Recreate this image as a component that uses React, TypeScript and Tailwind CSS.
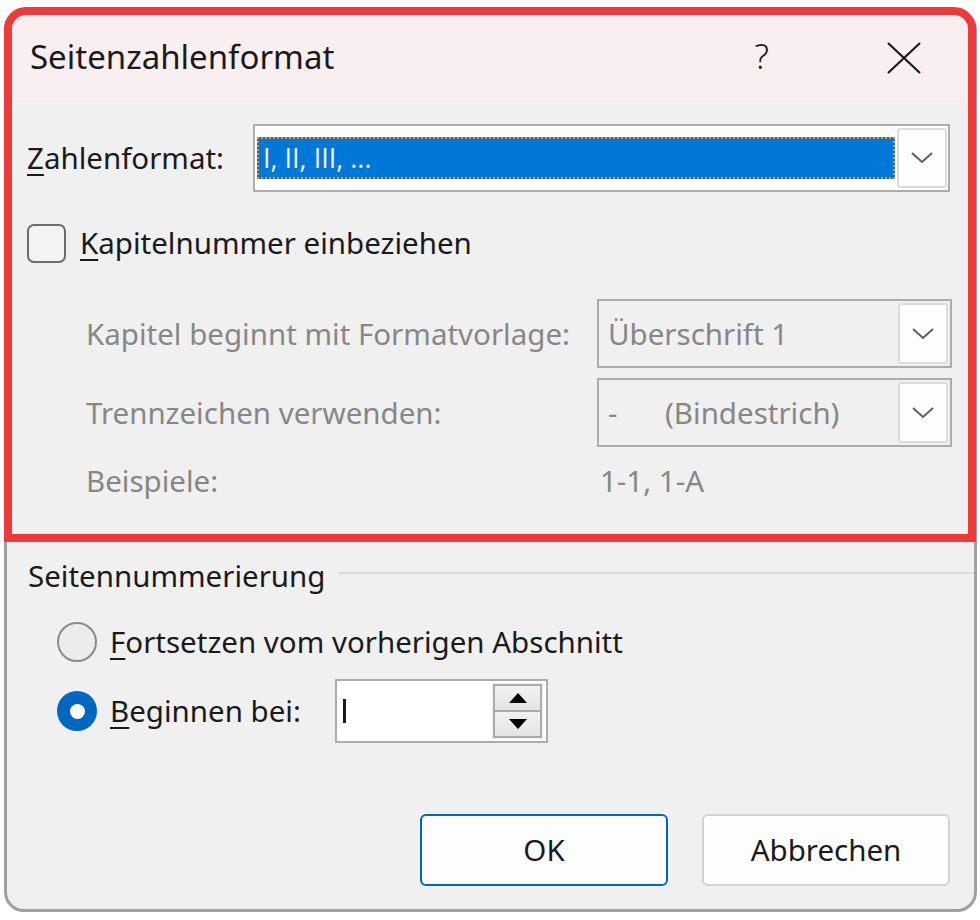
import React from 'react';

const font = {fontFamily: '"Noto Sans", "Open Sans", sans-serif'};

function Chevron() {
  return (
    <svg width="22" height="12" viewBox="0 0 22 12" className="block">
      <polyline points="1,1 11,10 21,1" fill="none" stroke="#5f5f5f" strokeWidth="2" />
    </svg>
  );
}

function DropButton() {
  return (
    <div className="flex h-full w-[50px] items-center justify-center rounded-[3px] border-2 border-[#dcdcdc] bg-[#fdfdfd]">
      <Chevron />
    </div>
  );
}

function Underlined({first, rest}: {first: string; rest: string}) {
  return (
    <span>
      <span className="underline decoration-2 underline-offset-[5px]">{first}</span>
      {rest}
    </span>
  );
}

function Radio({checked}: {checked?: boolean}) {
  if (checked) {
    return (
      <div className="flex h-[40px] w-[40px] items-center justify-center rounded-full bg-[#0067c0]">
        <div className="h-[15px] w-[15px] rounded-full bg-white" />
      </div>
    );
  }
  return <div className="h-[40px] w-[40px] rounded-full border-2 border-[#8a8a8a] bg-[#ececec]" />;
}

function Triangle({down}: {down?: boolean}) {
  return (
    <svg width="18" height="10" viewBox="0 0 18 10" className="block">
      <polygon points={down ? '0,0 18,0 9,10' : '9,0 18,10 0,10'} fill="#000" />
    </svg>
  );
}

export default function App() {
  return (
    <div className="relative h-[920px] w-[980px] bg-white text-[29.5px] text-[#1a1a1a]" style={font}>
      <div className="px-[4px] pt-[10px]">
        <div className="flex h-[902px] w-[973px] flex-col overflow-hidden rounded-[20px] border-[3px] border-[#a0a0a0] bg-[#f0f0f0]">
          {/* title bar */}
          <div className="flex h-[87px] shrink-0 items-center bg-[#f9eff1] pl-[23px] text-[33px]">
            <span>Seitenzahlenformat</span>
            <span className="ml-auto mr-[117px] text-[34px] font-light">?</span>
            <svg width="36" height="32" viewBox="0 0 36 32" className="mr-[52px] mt-[2px]">
              <path d="M2 1 L34 31 M34 1 L2 31" stroke="#1a1a1a" strokeWidth="2.2" />
            </svg>
          </div>

          {/* body */}
          <div className="flex flex-1 flex-col pl-[20px]">
            <div className="mt-[24px] flex h-[68px] items-center">
              <div className="w-[226px]">
                <Underlined first="Z" rest="ahlenformat:" />
              </div>
              <div className="flex h-full w-[697px] items-center border-2 border-[#acacb0] bg-white py-[2px] pl-[2px] pr-[1px]">
                <div
                  className="flex h-[42px] flex-1 items-center border-2 border-dotted border-[#f08a24] bg-[#0078d7] pl-[4px] text-[27px] text-[#f3f0ff]"
                  style={{fontFamily: '"Open Sans", "Noto Sans", sans-serif'}}
                >
                  I, II, III, ...
                </div>
                <div className="ml-[2px] h-full">
                  <DropButton />
                </div>
              </div>
            </div>

            <div className="mt-[29px] flex items-center">
              <div className="h-[39px] w-[39px] rounded-[7px] border-2 border-[#6c6c6c] bg-[#f3f3f3]" />
              <div className="ml-[14px]">
                <Underlined first="K" rest="apitelnummer einbeziehen" />
              </div>
            </div>

            <div className="mt-[34px] flex flex-col gap-[10px] pl-[59px] text-[#878787]">
              <div className="flex h-[69px] items-center">
                <div className="w-[511px]">Kapitel beginnt mit Formatvorlage:</div>
                <div className="flex h-full w-[355px] items-center border-2 border-[#acacb0] pl-[9px]">
                  <span className="flex-1">Überschrift 1</span>
                  <div className="h-full py-[2px] pr-[2px]">
                    <DropButton />
                  </div>
                </div>
              </div>
              <div className="flex h-[69px] items-center">
                <div className="w-[511px]">Trennzeichen verwenden:</div>
                <div className="flex h-full w-[355px] items-center border-2 border-[#acacb0] pl-[9px]">
                  <span className="w-[57px]">-</span>
                  <span className="flex-1">(Bindestrich)</span>
                  <div className="h-full py-[2px] pr-[2px]">
                    <DropButton />
                  </div>
                </div>
              </div>
              <div className="mt-[2px] flex items-center">
                <div className="w-[514px]">Beispiele:</div>
                <div>1-1, 1-A</div>
              </div>
            </div>

            <div className="mt-[50px] flex items-center">
              <span className="ml-[1px]">Seitennummerierung</span>
              <div className="ml-[14px] mt-[-6px] h-[2px] flex-1 bg-[#dcdcdc]" />
            </div>

            <div className="mt-[22px] flex items-center pl-[30px]">
              <Radio />
              <div className="ml-[13px]">
                <Underlined first="F" rest="ortsetzen vom vorherigen Abschnitt" />
              </div>
            </div>

            <div className="mt-[15px] flex items-center pl-[30px]">
              <Radio checked />
              <div className="ml-[13px] w-[225px]">
                <Underlined first="B" rest="eginnen bei:" />
              </div>
              <div className="flex h-[64px] w-[213px] items-center border-2 border-[#acacac] bg-white pl-[6px]">
                <div className="h-[24px] w-[3px] bg-[#1a1a1a]" />
                <div className="ml-auto mr-[3px] flex h-[56px] w-[51px] flex-col bg-[#f0f0f0] p-[1px]">
                  <div className="flex flex-1 items-center justify-center border-2 border-[#acacac] bg-gradient-to-b from-[#f2f2f2] to-[#e4e4e4]">
                    <Triangle />
                  </div>
                  <div className="flex flex-1 items-center justify-center border-2 border-t-0 border-[#acacac] bg-gradient-to-b from-[#f2f2f2] to-[#e4e4e4]">
                    <Triangle down />
                  </div>
                </div>
              </div>
            </div>

            <div className="mt-[71px] flex gap-[34px] pl-[393px]">
              <button className="h-[72px] w-[248px] rounded-[6px] border-2 border-[#0067c0] bg-[#fdfdfd]" style={font}>
                OK
              </button>
              <button className="h-[72px] w-[248px] rounded-[6px] border-2 border-[#d2d2d2] bg-[#fdfdfd]" style={font}>
                Abbrechen
              </button>
            </div>
          </div>
        </div>
      </div>

      {/* annotation highlight */}
      <div className="pointer-events-none absolute left-[4px] top-[7px] h-[535px] w-[972px] rounded-t-[22px] border-[8px] border-[#ee3a3a]" />
    </div>
  );
}
